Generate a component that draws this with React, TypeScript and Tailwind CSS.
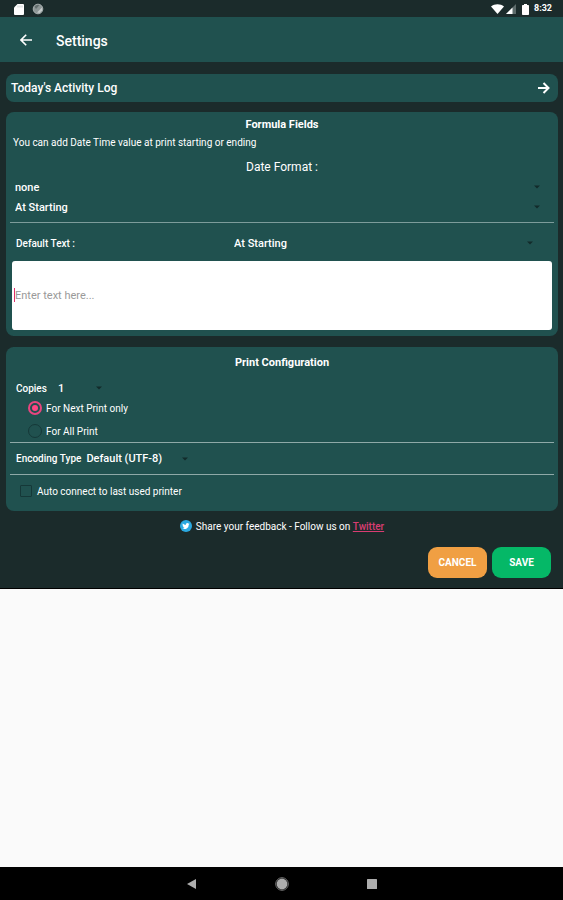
import { useState } from 'react';
import clsx from 'clsx';

interface SpinnerProps {
  label: string;
  options: string[];
  className?: string;
  caretClassName?: string;
}

function Spinner({ label, options, className, caretClassName }: SpinnerProps) {
  return (
    <div className={clsx('relative flex h-5 items-center', className)}>
      <select
        aria-label={label}
        className="h-5 w-full appearance-none bg-transparent pt-[2px] text-[11px] font-medium text-white outline-none"
      >
        {options.map((option) => (
          <option key={option}>{option}</option>
        ))}
      </select>
      <svg
        viewBox="0 0 6 4"
        className={clsx('pointer-events-none absolute h-1 w-1.5 fill-[#122b2b]', caretClassName)}
      >
        <path d="M0 0.5h6L3 3.5z" />
      </svg>
    </div>
  );
}

function StatusBar() {
  return (
    <div className="flex h-[17px] items-center justify-between bg-[#1b2b2b] pr-[11px] pl-[14px]">
      <div className="flex items-center gap-2 pt-px">
        <svg viewBox="0 0 10 11" className="h-[11px] w-[10px]">
          <path d="M3.5 0H9a1 1 0 0 1 1 1v9a1 1 0 0 1-1 1H1a1 1 0 0 1-1-1V3.5z" fill="#fff" />
          <path d="M4 1.5v2M6 1.5v2M8 1.5v2" stroke="#b9c0c0" strokeWidth="0.8" />
        </svg>
        <svg viewBox="0 0 12 12" className="h-3 w-3">
          <circle cx="6" cy="6" r="4.8" fill="#8d9696" stroke="#a9b0b0" />
          <path d="M2.5 3.5a4.5 4.5 0 0 1 5-1.5L4 6z" fill="#626d6d" />
          <path d="M5 9.5l5-5v3L7.5 10z" fill="#c5caca" />
        </svg>
      </div>
      <div className="flex items-center gap-[2px] pt-px text-[9px] font-bold text-white">
        <svg viewBox="0 0 13 10" className="h-[10px] w-[13px]">
          <path d="M0 2.5C3.5-.6 9.5-.6 13 2.5L6.5 10z" fill="#fff" />
        </svg>
        <svg viewBox="0 0 10 10" className="h-[10px] w-[10px]">
          <path d="M10 0v10H0z" fill="#5d6b6b" />
          <path d="M6.5 3.5V10H0z" fill="#fff" />
        </svg>
        <svg viewBox="0 0 7 11" className="ml-1 h-[11px] w-[7px]">
          <path d="M2 0h3v1h1.2q.8 0 .8.8v8.400q0 .8-.8.8H.8q-.8 0-.8-.8V1.800Q0 1 .8 1H2z" fill="#fff" />
        </svg>
        <span className="ml-[3px]">8:32</span>
      </div>
    </div>
  );
}

export default function App() {
  const [scope, setScope] = useState('next');
  const [text, setText] = useState('');
  const [autoConnect, setAutoConnect] = useState(false);

  return (
    <div className="flex min-h-screen flex-col bg-[#fafafa] font-[Roboto,sans-serif] text-white">
      <StatusBar />
      <header className="flex h-[45px] items-center bg-[#20514f] pl-5">
        <button aria-label="Back" className="flex h-6 w-3 items-center">
          <svg viewBox="0 0 12 12" className="h-3 w-3" fill="none" stroke="#fff" strokeWidth="1.6">
            <path d="M12 6H1.2M6.2.8L1 6l5.2 5.2" />
          </svg>
        </button>
        <h1 className="ml-6 pt-[2px] text-sm font-medium">Settings</h1>
      </header>

      <main className="border-b border-black bg-[#1b2b2b] pt-3 pr-[5px] pb-[10px] pl-[6px]">
        <button className="flex h-7 w-full items-center justify-between rounded-lg bg-[#20514f] pr-2 pl-[5px] text-left">
          <span className="text-xs font-medium">Today's Activity Log</span>
          <svg viewBox="0 0 12 12" className="h-3 w-3" fill="none" stroke="#fff" strokeWidth="2">
            <path d="M0 6h10.5M5.5 1l5 5-5 5" />
          </svg>
        </button>

        <section className="mt-[10px] rounded-lg bg-[#20514f] px-1 pt-[5px] pb-[6px]">
          <h2 className="text-center text-[11px] leading-4 font-bold">Formula Fields</h2>
          <p className="mt-[2px] px-[3px] text-[10px] leading-4">
            You can add Date Time value at print starting or ending
          </p>
          <p className="mt-[7px] text-center text-xs leading-[18px]">Date Format :</p>
          <Spinner label="Date format" options={['none']} className="mt-px px-[5px]" caretClassName="right-[14px]" />
          <Spinner
            label="Date position"
            options={['At Starting', 'At Ending']}
            className="px-[5px]"
            caretClassName="right-[14px]"
          />
          <hr className="mt-[5px] border-[#7d9c9b]" />
          <div className="mt-2 flex h-6 items-center px-[6px]">
            <label htmlFor="default-text" className="w-[41%] text-[10px] font-medium">
              Default Text :
            </label>
            <Spinner
              label="Default text position"
              options={['At Starting', 'At Ending']}
              className="flex-1"
              caretClassName="right-[15px]"
            />
          </div>
          <div className="relative mx-[2px] mt-[6px]">
            <textarea
              id="default-text"
              value={text}
              onChange={(e) => setText(e.target.value)}
              placeholder="Enter text here..."
              className="block h-[69px] w-full resize-none rounded-[3px] bg-white px-[3px] pt-[27px] text-[11px] leading-4 text-black caret-[#e0306e] outline-none placeholder:text-[#9a9a9a]"
            />
            {!text && <span className="absolute top-[27px] left-[2px] h-[14px] w-px bg-[#e0306e]" />}
          </div>
        </section>

        <section className="mt-[11px] rounded-lg bg-[#20514f] px-1 pt-2 pb-1">
          <h2 className="text-center text-[11px] leading-4 font-bold">Print Configuration</h2>
          <div className="mt-[7px] flex h-5 items-center px-[6px]">
            <span className="text-[10px] font-medium">Copies</span>
            <Spinner label="Copies" options={['1', '2', '3']} className="ml-[11px] w-12" caretClassName="right-1" />
          </div>
          <label className="flex h-5 items-center gap-1 pl-[18px] text-[10px]">
            <input
              type="radio"
              name="scope"
              checked={scope === 'next'}
              onChange={() => setScope('next')}
              className="h-[14px] w-[14px] appearance-none rounded-full border border-[#153838] bg-clip-content p-[2px] checked:border-2 checked:border-[#e8457f] checked:bg-[#ff4583]"
            />
            For Next Print only
          </label>
          <label className="mt-[2px] flex h-[22px] items-center gap-1 pl-[18px] text-[10px]">
            <input
              type="radio"
              name="scope"
              checked={scope === 'all'}
              onChange={() => setScope('all')}
              className="h-[14px] w-[14px] appearance-none rounded-full border border-[#153838] bg-clip-content p-[2px] checked:border-2 checked:border-[#e8457f] checked:bg-[#ff4583]"
            />
            For All Print
          </label>
          <hr className="border-[#8fa9a8]" />
          <div className="flex h-[31px] items-center px-[6px]">
            <span className="text-[10px] font-medium">Encoding Type</span>
            <Spinner
              label="Encoding type"
              options={['Default (UTF-8)']}
              className="ml-[5px] w-[106px]"
              caretClassName="right-1"
            />
          </div>
          <hr className="border-[#8fa9a8]" />
          <label className="flex h-8 items-center gap-[5px] pl-[10px] text-[10px]">
            <input
              type="checkbox"
              checked={autoConnect}
              onChange={(e) => setAutoConnect(e.target.checked)}
              className="h-3 w-3 appearance-none rounded-[1px] border border-[#153838] checked:bg-[#ff4583]"
            />
            Auto connect to last used printer
          </label>
        </section>

        <div className="mt-[7px] flex h-4 items-center justify-center text-[10px]">
          <svg viewBox="0 0 24 24" className="mr-1 h-3 w-3">
            <circle cx="12" cy="12" r="12" fill="#2ba9e1" />
            <path
              d="M19 7.600c-.5.3-1.100.4-1.700.5.600-.4 1.100-1 1.300-1.700-.6.4-1.200.6-1.900.7a3 3 0 0 0-5.100 2.700A8.400 8.400 0 0 1 5.500 6.800a3 3 0 0 0 .9 4c-.5 0-.9-.2-1.300-.4 0 1.400 1 2.700 2.400 2.900-.4.1-.9.1-1.300.1.400 1.200 1.500 2 2.800 2a6 6 0 0 1-4.400 1.200A8.400 8.400 0 0 0 17.600 9.100c.5-.4 1-.9 1.400-1.500z"
              fill="#fff"
            />
          </svg>
          <p>
            Share your feedback - Follow us on{' '}
            <a href="#twitter" className="font-medium text-[#d93d72] underline">
              Twitter
            </a>
          </p>
        </div>

        <div className="mt-[13px] flex justify-end gap-[5px] pr-[7px] text-[10px] font-bold">
          <button className="h-[31px] w-[59px] rounded-[9px] bg-[#f09f43]">CANCEL</button>
          <button className="h-[31px] w-[59px] rounded-[9px] bg-[#05b867]">SAVE</button>
        </div>
      </main>

      <nav className="mt-auto flex h-[33px] items-center justify-center gap-[74px] bg-black">
        <button aria-label="Back">
          <svg viewBox="0 0 16 16" className="h-4 w-4 fill-[#adadad]">
            <path d="M3 8l9-5v10z" />
          </svg>
        </button>
        <button aria-label="Home">
          <svg viewBox="0 0 16 16" className="h-4 w-4">
            <circle cx="8" cy="8" r="6.3" fill="none" stroke="#777" />
            <circle cx="8" cy="8" r="5.4" fill="#adadad" />
          </svg>
        </button>
        <button aria-label="Recent apps">
          <svg viewBox="0 0 16 16" className="h-4 w-4 fill-[#adadad]">
            <rect x="3" y="3" width="10" height="10" rx="0.5" />
          </svg>
        </button>
      </nav>
    </div>
  );
}
